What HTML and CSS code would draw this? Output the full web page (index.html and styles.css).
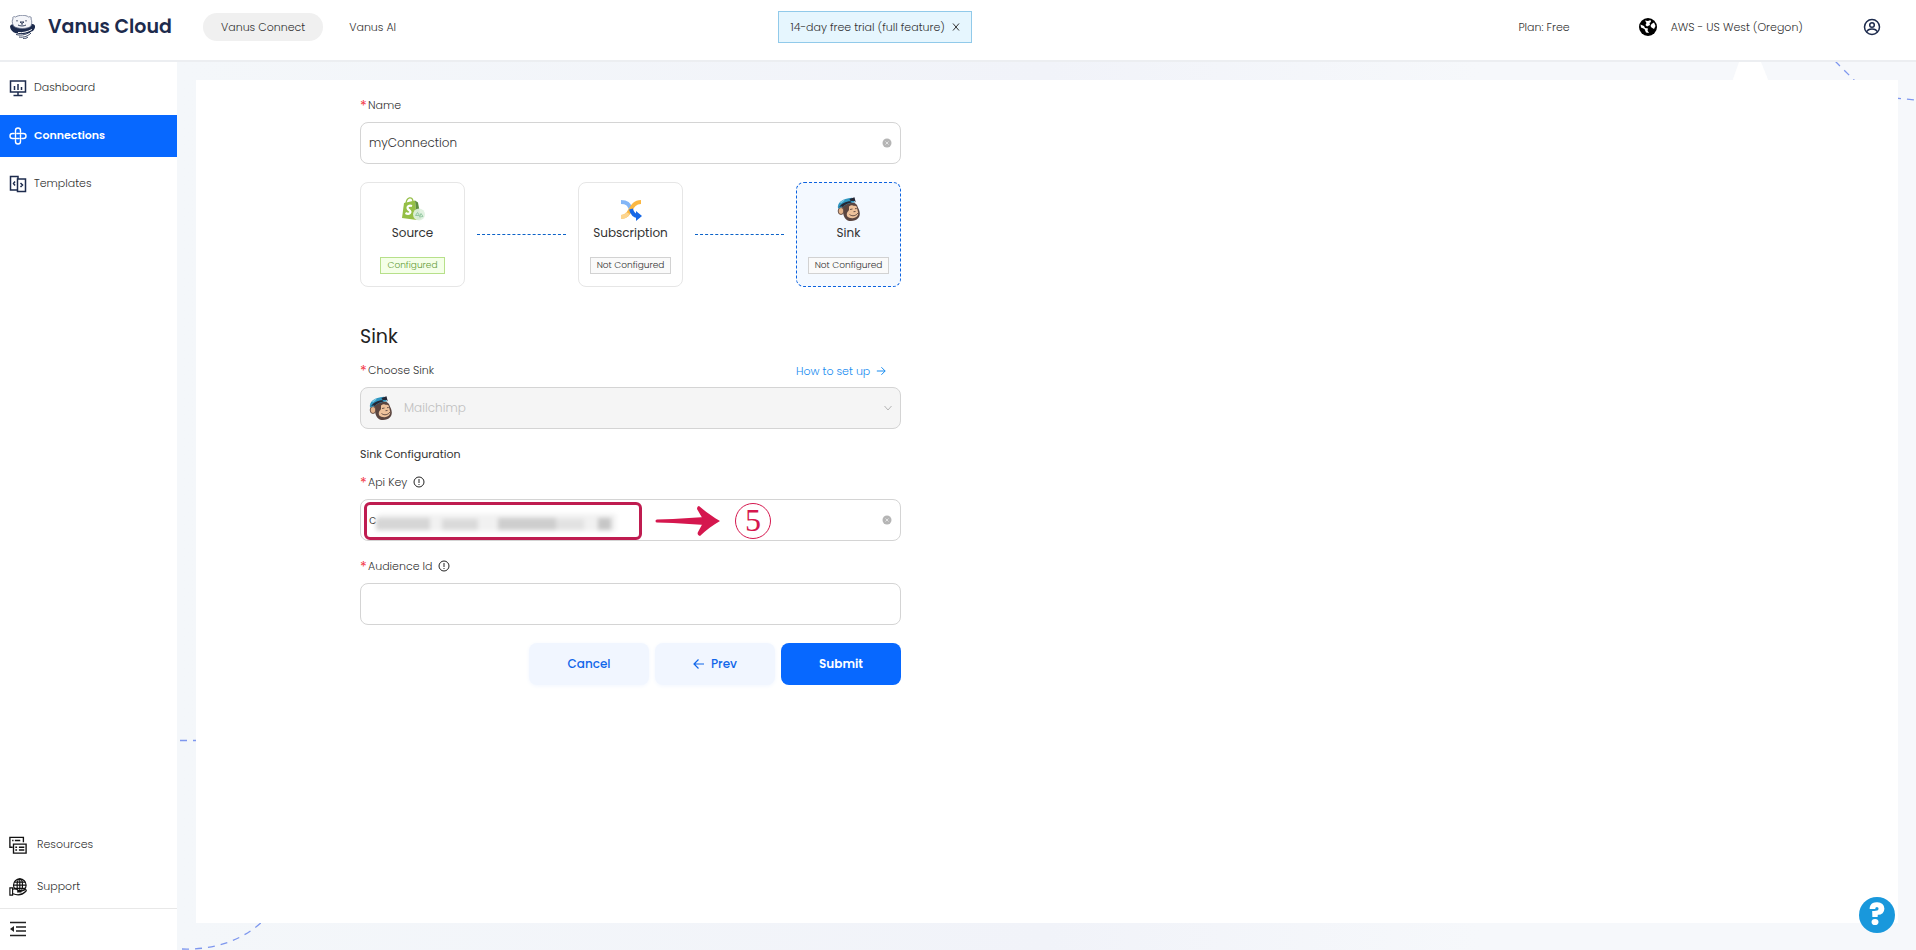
FILE: index.html
```html
<!DOCTYPE html>
<html lang="en">
<head>
<meta charset="utf-8">
<title>Vanus Cloud</title>
<link rel="stylesheet" href="styles.css">
</head>
<body>
<svg class="defs" aria-hidden="true">
  <symbol id="chimp" viewBox="0 0 24 24">
    <path d="M5 10C7 6 17 3 20 8c1 3 2 4 2.500 6.500C24 20 20 24 14 24c-4 0-6-2-7.500-6z" fill="#5a4540"/>
    <ellipse cx="4" cy="14" rx="2.800" ry="3.500" fill="#e5b58c" stroke="#5a4540" stroke-width=".9"/>
    <path d="M12 9.500c2-2 4-1.500 5-.5 1.500-.5 2.800 0 3 2l1 4c1 3-1.500 6-5.500 6.200-4.500.1-6.500-2.200-5.500-5.200.4-1.500 2-2 2-3.500z" fill="#eec29b"/>
    <path d="M12.500 17.500c3 2.300 6.500 1.300 8.500-1.500M13 12.500l2.500-.5M18 11.700l1.700-.2M16.500 14.700l2-.2" stroke="#5a4540" stroke-width=".9" fill="none"/>
    <path d="M1 11.500C0 6 5 1.500 15 .8l3 4.700C12 5.500 8 8 5.500 10z" fill="#2f97c1"/>
    <path d="M12.500 2L17.500.3l1.300 5.200-4.300.2zM1 11.500c1.500-1.800 3-2.500 4.500-1.500C8 7 13 5 18.800 5.500L17.500 4C12 3.500 6 5 3 9z" fill="#252735"/>
    <path d="M3.500 6l3.500-3" stroke="#7bc7e2" stroke-width="1.500"/>
  </symbol>
  <symbol id="info" viewBox="0 0 12 12">
    <circle cx="6" cy="6" r="5" fill="none" stroke="#222"/>
    <path d="M6 3v4M6 8v1" stroke="#222"/>
  </symbol>
  <symbol id="clear" viewBox="0 0 10 10">
    <circle cx="5" cy="5" r="4.500" fill="#b5b5b5"/>
    <path d="M3.500 3.500l3 3m0-3l-3 3" stroke="#eee" stroke-width=".8"/>
  </symbol>
  <symbol id="arrow" viewBox="0 0 12 12">
    <path d="M1 6h10M6.500 1.500L11 6l-4.500 4.500" fill="none" stroke="currentColor" stroke-width="1.200"/>
  </symbol>
</svg>

<header class="header">
  <a class="brand" href="#">
    <svg class="brand-mark" viewBox="0 0 26 24" aria-hidden="true">
      <path d="M0 11.500c.5-2 2.500-2.500 4-2l17-.5c3-.5 4.500 1 4 3.500-1 4.500-7 6.500-13 6.500C5 19 .5 16.500 0 11.500z" fill="#1d2b4d"/>
      <path d="M3.500 11C1.800 7.500 2 5 3 4c-1-2 1-3 2.500-2C9-.3 16-.3 18.500 2c2-1 3.500.5 2.500 2 1 2 1 4 0 7-3 3.300-14 3.300-17.500 0z" fill="#f5f6fa" stroke="#68728d" stroke-width=".8"/>
      <path d="M7 5v1.500M16 5v1.500M10 7h4l-2 1.500zM12 8.500V10M8 10c2 1.300 6 1.300 8 0" stroke="#1d2b4d" fill="none" stroke-width=".9"/>
      <path d="M8 17.500c5 .5 9-.5 14-3M10 20.500c4 .3 9-1 12-4" stroke="#fff" stroke-width="1" fill="none"/>
      <path d="M6 19.500c6 1.500 11 0 16-4M9 22c5 .8 9-1 12-4M13 23.700c2 0 4-.7 5-1.700" stroke="#1d2b4d" stroke-width=".9" fill="none"/>
    </svg>
    <span>Vanus Cloud</span>
  </a>
  <nav class="tabs" aria-label="Products">
    <a class="tab tab-active" href="#">Vanus Connect</a>
    <a class="tab" href="#">Vanus AI</a>
  </nav>
  <div class="trial"><span>14-day free trial (full feature)</span>
    <button class="plain" type="button" aria-label="Dismiss"><svg class="i8" viewBox="0 0 8 8"><path d="M1 .5l6 7M7 .5l-6 7" stroke="#333"/></svg></button>
  </div>
  <div class="account">
    <span class="plan">Plan: Free</span>
    <button class="plain region" type="button">
      <svg class="i18" viewBox="0 0 18 18" aria-hidden="true"><circle cx="9" cy="9" r="9" fill="#000"/><path d="M1.500 6.500L5 8l1 2 3 .5-.5 2L10 15l-3-.5L5.500 11 2 9.500zM6 2.500l3 .5 2.500-1L12 4l-1.500 1L11 7 8 8.500 6.500 7l1-2zM12.500 6l2.500-1.500L16.500 8 15 11l-2.500-1.500L11.500 8z" fill="#fff"/></svg>
      <span>AWS - US West (Oregon)</span>
    </button>
    <button class="plain" type="button" aria-label="Account"><svg class="i18" viewBox="0 0 18 18"><g fill="none" stroke="#1d2b4d" stroke-width="1.500"><circle cx="9" cy="9" r="7.500"/><circle cx="9" cy="7" r="2.300"/><path d="M3.500 14c1-2.300 3-3 5.500-3s4.500.7 5.500 3"/></g></svg></button>
  </div>
</header>

<div class="shell">
  <aside class="sidebar">
    <nav class="menu" aria-label="Main">
      <a class="item" href="#"><svg class="i18" viewBox="0 0 18 18"><path d="M1.500 2h15v11h-15zM9 13v3M4.500 16.500h9M5.500 7v4M9 5v6M12.500 8v3" fill="none" stroke="#1d2b4d" stroke-width="1.500"/></svg><span>Dashboard</span></a>
      <a class="item item-active" href="#" aria-current="page"><svg class="i18" viewBox="0 0 18 18"><path d="M11.500 5V3.500a2.500 2.500 0 0 0-5 0V10M6.500 13v1.500a2.500 2.500 0 0 0 5 0V8M5 6.500H3.500a2.500 2.500 0 0 0 0 5H10M13 11.500h1.500a2.500 2.500 0 0 0 0-5H8" fill="none" stroke="#fff" stroke-width="1.400" stroke-linecap="round"/></svg><span>Connections</span></a>
      <a class="item" href="#"><svg class="i18" viewBox="0 0 18 18"><path d="M8.500 15h-7V1.500h7.500V4M8.500 4h8v12.500h-8zM6 6.500L4.500 8.500 6 10.500M11.500 8l2 2-2 2" fill="none" stroke="#1d2b4d" stroke-width="1.500"/></svg><span>Templates</span></a>
    </nav>
    <nav class="menu menu-low" aria-label="Help">
      <a class="item" href="#"><svg class="i18" viewBox="0 0 20 20"><path d="M4 12.500H1V1.500h15V7M5 9h14v10H5zM3.500 5h1.500M6.500 5h6M7 12.500h2M11 12.500h6M7 15.500h2M11 15.500h6" fill="none" stroke="#111" stroke-width="1.500"/></svg><span>Resources</span></a>
      <a class="item" href="#"><svg class="i18" viewBox="0 0 20 20"><g fill="none" stroke="#111" stroke-width="1.300"><circle cx="12" cy="8" r="7"/><ellipse cx="12" cy="8" rx="3" ry="7"/><path d="M5 8h14M12 1v14M6 4.500h12M6 11.500h12"/><path d="M1 11h3v8H1zM4 12.500c3-1 5 0 6 1.500h3c1 0 1 1.500 0 1.500H9M13 15l5-2c1.500 0 1.500 1 .5 2-4 4-8 5-14 2.500" fill="#fff"/></g></svg><span>Support</span></a>
    </nav>
    <div class="collapse"><button class="plain" type="button" aria-label="Collapse menu"><svg class="i16" viewBox="0 0 16 16"><path d="M0 1.500h16M6 6h10M6 10h10M0 14.500h16" stroke="#222" stroke-width="1.400"/><path d="M0 8l4-3v6z" fill="#222"/></svg></button></div>
  </aside>

  <main class="main">
    <svg class="deco deco-top" viewBox="0 0 190 50" aria-hidden="true"><path d="M6 20L13 0h22l8 20z" fill="#fff"/><path d="M109-1l20 20M168 36l22 2" class="dash"/></svg>
    <svg class="deco deco-low" viewBox="0 0 90 215" aria-hidden="true"><path d="M3 5.500h16M5 214c32 1 60-8 82-29" class="dash"/></svg>
    <section class="panel">
      <form class="form">
        <label class="label" for="name"><span class="req">*</span>Name</label>
        <div class="field">
          <input id="name" class="input" type="text" value="myConnection">
          <button class="plain" type="button" aria-label="Clear name"><svg class="i10"><use href="#clear"/></svg></button>
        </div>

        <div class="steps">
          <button class="step" type="button">
            <svg class="step-icon" viewBox="0 0 24 24" aria-hidden="true"><path d="M3 6l11-2.500L16 23 1 21z" fill="#95bf46"/><path d="M14 3.500l3 2L20 22l-4 1z" fill="#5e8e3e"/><path d="M5 6c1-6 6-7 7-2" fill="none" stroke="#95bf46" stroke-width="1.300"/><path d="M11 9c-4-1.500-6 2-3 4 3.500 2.500 0 5-3.500 3" fill="none" stroke="#fff" stroke-width="2.200"/><circle cx="18" cy="17.500" r="6" fill="#dff1df" opacity=".93"/><path d="M14.500 18.500l2-3 2 3zm4 1.500l1.500-3.500 2 3z" fill="none" stroke="#95c9a4"/></svg>
            <span class="step-name">Source</span><span class="tag tag-ok">Configured</span>
          </button>
          <span class="link-line"></span>
          <button class="step" type="button">
            <svg class="step-icon" viewBox="0 0 24 24" aria-hidden="true"><g fill="none" stroke-width="4"><path d="M2 5c8 0 8 4 10 7" stroke="#83b6f7"/><path d="M2 20c11 0 8-15 20-15" stroke="#fbb741"/><path d="M2 20c4 0 6-2 7-4" stroke="#fcd590"/><path d="M12 12c1 4 3 7 7 7" stroke="#1768e6"/></g><path d="M17 14l6 5-6 5z" fill="#1768e6"/></svg>
            <span class="step-name">Subscription</span><span class="tag">Not Configured</span>
          </button>
          <span class="link-line"></span>
          <button class="step step-active" type="button">
            <svg class="step-icon" aria-hidden="true"><use href="#chimp"/></svg>
            <span class="step-name">Sink</span><span class="tag">Not Configured</span>
          </button>
        </div>

        <h2 class="title">Sink</h2>
        <div class="label-row">
          <label class="label" for="sink"><span class="req">*</span>Choose Sink</label>
          <a class="howto" href="#">How to set up<svg class="i10"><use href="#arrow"/></svg></a>
        </div>
        <div class="field field-off">
          <svg class="i24" aria-hidden="true"><use href="#chimp"/></svg>
          <select id="sink" class="input" disabled><option>Mailchimp</option></select>
          <svg class="i8" viewBox="0 0 8 8"><path d="M.5 2L4 6l3.500-4" fill="none" stroke="#b5b5b5"/></svg>
        </div>

        <h3 class="subtitle">Sink Configuration</h3>
        <label class="label" for="key"><span class="req">*</span>Api Key<svg class="i12 info"><use href="#info"/></svg></label>
        <div class="field">
          <input id="key" class="input" type="text" value="c">
          <button class="plain" type="button" aria-label="Clear API key"><svg class="i10"><use href="#clear"/></svg></button>
          <div class="callout">
            <div class="mark-box"><svg class="smudge" viewBox="0 0 260 24" aria-hidden="true"><path d="M6 3h238v17H6z" fill="#f1f1f1"/><path d="M4 7h54v12H4z" fill="#d6d6d6"/><path d="M70 8h36v11H70z" fill="#dadada"/><path d="M126 7h58v12h-58z" fill="#cecece"/><path d="M184 8h28v11h-28z" fill="#e2e2e2"/><path d="M226 7h13v12h-13z" fill="#c6c6c6"/></svg></div>
            <svg class="mark-arrow" viewBox="0 0 65 30" aria-hidden="true"><path d="M2 15l56 0" stroke="#d5174e" stroke-width="3" stroke-linecap="round"/><path d="M2 14l48-3v8L2 16z" fill="#d5174e"/><path d="M44 0c7 6 14 11 21 15-7 4-14 9-20 15-2-1-3-2-2-4l6-11-7-12c0-2 1-3 2-3z" fill="#d5174e"/></svg>
            <span class="mark-num">5</span>
          </div>
        </div>

        <label class="label label-next" for="aud"><span class="req">*</span>Audience Id<svg class="i12 info"><use href="#info"/></svg></label>
        <div class="field"><input id="aud" class="input" type="text"></div>

        <div class="actions">
          <button class="btn" type="button">Cancel</button>
          <button class="btn" type="button"><svg class="i12 flip"><use href="#arrow"/></svg>Prev</button>
          <button class="btn btn-main" type="submit">Submit</button>
        </div>
      </form>
    </section>
  </main>
</div>
<button class="plain help" type="button" aria-label="Help">?</button>
</body>
</html>
```

FILE: styles.css
```css
* { box-sizing: border-box; }
body {
  margin: 0;
  min-height: 100vh;
  display: flex;
  flex-direction: column;
  font: 300 11px/16px Poppins, Inter, "Open Sans", sans-serif;
  color: #333;
  background: #fff;
}
a { color: inherit; text-decoration: none; }
button, input, select { font: inherit; color: inherit; }
svg { flex: none; display: block; }
.defs { position: absolute; width: 0; height: 0; }
.plain { border: 0; padding: 0; background: none; display: flex; align-items: center; }
.i8 { width: 8px; height: 8px; }
.i10 { width: 10px; height: 10px; }
.i12 { width: 12px; height: 12px; }
.i16 { width: 16px; height: 16px; }
.i18 { width: 18px; height: 18px; }
.i24 { width: 24px; height: 24px; }

.header {
  display: flex;
  align-items: center;
  height: 62px;
  padding: 0 35px 6px 10px;
  border-bottom: 2px solid #eceef1;
}
.brand { display: flex; align-items: center; gap: 12px; width: 193px; font-size: 19px; line-height: 28px; font-weight: 600; color: #1d2b4d; }
.brand-mark { width: 26px; height: 24px; }
.tabs { display: flex; gap: 8px; }
.tab { padding: 6px 18px; border-radius: 14px; }
.tab-active { background: #f0f0f0; }
.header::before, .header::after { content: ""; order: 2; flex: 2; }
.header::after { order: 4; flex: 3; }
.trial { order: 3; display: flex; align-items: center; gap: 7px; padding: 7px 11px; border: 1px solid #91caea; background: #e6f6fe; }
.account { order: 5; display: flex; align-items: center; }
.region { gap: 14px; margin: 0 60px 0 69px; }

.shell { flex: 1; display: grid; grid-template-columns: 177px 1fr; }
.sidebar { display: flex; flex-direction: column; }
.menu { display: flex; flex-direction: column; gap: 6px; padding-top: 5px; }
.item { display: flex; align-items: center; gap: 7px; height: 42px; padding-left: 9px; }
.item span { padding-bottom: 2px; }
.item-active { background: #0768ff; color: #fff; font-weight: 600; }
.menu-low { margin-top: auto; gap: 0; }
.menu-low .item { gap: 10px; }
.collapse { border-top: 1px solid #e8e8e8; height: 42px; padding: 0 0 2px 10px; display: flex; align-items: center; }

.main { position: relative; display: flex; padding: 18px 18px 27px 19px; background: linear-gradient(90deg, #f4f7fa, #f1f3f9 50%, #f6f8fb 75%); }
.deco { position: absolute; }
.deco-top { top: 0; right: 0; width: 190px; height: 50px; }
.deco-low { left: 0; bottom: 0; width: 90px; height: 215px; }
.dash { fill: none; stroke: #7e97ee; stroke-width: 1.3; stroke-dasharray: 7 6; }
.panel { position: relative; flex: 1; background: #fff; padding: 17px 24px 24px 164px; }
.form { max-width: 541px; }

.label { display: flex; align-items: center; margin-bottom: 9px; }
.req { width: 8px; height: 14px; color: #f33b4b; font-size: 14px; font-weight: 400; }
.info { margin-left: 6px; }
.field {
  position: relative;
  display: flex;
  align-items: center;
  height: 42px;
  padding: 0 8px;
  border: 1px solid #d4d4d4;
  border-radius: 8px;
}
.input { flex: 1; min-width: 0; padding: 0; border: 0; outline: 0; background: none; font-size: 12px; appearance: none; opacity: 1; }
.field-off { background: #f5f5f5; }
.field-off .input { margin-left: 11px; color: #c0c0c0; }

.steps { display: flex; align-items: center; gap: 12px; margin-top: 18px; }
.step {
  width: 105px;
  height: 105px;
  padding: 14px 0 0;
  display: flex;
  flex-direction: column;
  align-items: center;
  border: 1px solid #e6e6e6;
  border-radius: 8px;
  background: #fff;
}
.step-active { border: 1px dashed #0b62e0; background: #f4f9ff; }
.step-icon { width: 24px; height: 24px; }
.step-name { margin: 3px 0 15px; font-size: 12px; font-weight: 400; line-height: 18px; }
.tag { padding: 0 6px; border: 1px solid #d2d2d2; background: #fafafa; font-size: 9px; line-height: 15px; }
.tag-ok { border-color: #b7e08a; background: #f4ffe8; color: #629c35; }
.link-line { flex: 1; border-top: 1px dashed #0b62c8; }

.title { margin: 36px 0 11px; font-size: 19px; line-height: 28px; font-weight: 400; color: #222; }
.label-row { display: grid; grid-template-columns: 1fr 105px; }
.howto { display: flex; align-items: center; gap: 6px; height: 18px; color: #168bf0; }
.subtitle { margin: 17px 0 12px; font-size: 11px; line-height: 16px; font-weight: 400; }
.label-next { margin-top: 17px; }

.callout { position: absolute; left: 3px; top: 2px; display: flex; align-items: center; pointer-events: none; }
.mark-box { width: 278px; height: 38px; border: 3px solid #bf1c50; border-radius: 6px; padding: 6px 0 0 5px; }
.smudge { width: 260px; height: 24px; filter: blur(2px); }
.mark-arrow { width: 65px; height: 30px; margin: 0 15px 0 13px; }
.mark-num { width: 36px; height: 36px; border: 1px solid #d5174e; border-radius: 50%; color: #d5174e; font: 32px/33px "Liberation Serif", serif; text-align: center; }

.actions { display: flex; justify-content: flex-end; gap: 6px; margin-top: 18px; }
.btn {
  width: 120px;
  height: 42px;
  display: flex;
  align-items: center;
  justify-content: center;
  gap: 6px;
  border: 0;
  border-radius: 8px;
  background: #f1f6ff;
  box-shadow: 0 1px 4px #f1f6ff;
  color: #1167ea;
  font-size: 12px;
  font-weight: 500;
}
.btn-main { background: #0768ff; color: #fff; font-weight: 600; box-shadow: none; }
.flip { transform: scaleX(-1); }
.help {
  position: fixed;
  right: 21px;
  bottom: 17px;
  width: 36px;
  height: 36px;
  justify-content: center;
  border-radius: 50%;
  background: #1998dc;
  color: #fff;
  font-size: 30px;
  font-weight: 800;
}
```
